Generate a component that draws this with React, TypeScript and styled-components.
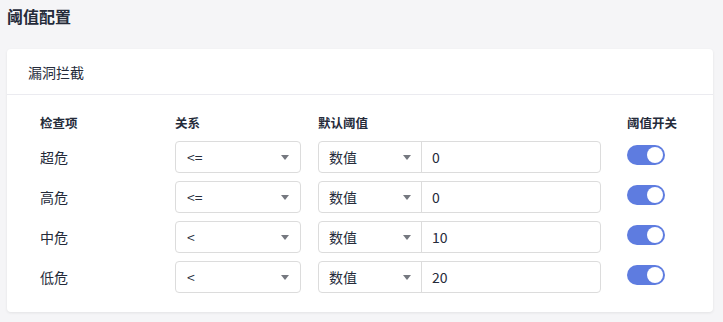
import React, { useState } from 'react';
import styled, { createGlobalStyle } from 'styled-components';

const GlobalStyle = createGlobalStyle`
  html, body {
    margin: 0;
    padding: 0;
    background: #f5f5f7;
    font-family: "Noto Sans CJK SC", "Noto Sans", sans-serif;
    color: #252b3a;
  }
  * { box-sizing: border-box; }
`;

const Page = styled.div`
  padding: 4px 10px 10px 7px;
  width: 723px;
  height: 322px;
`;

const PageTitle = styled.h1`
  font-size: 16px;
  font-weight: 700;
  line-height: 24px;
  margin: 0 0 21px 0;
  color: #252b3a;
`;

const Card = styled.div`
  width: 706px;
  background: #fff;
  border-radius: 4px;
  box-shadow: 0 1px 3px rgba(0, 0, 0, 0.08);
`;

const CardHeader = styled.div`
  height: 46px;
  padding: 0 21px;
  display: flex;
  align-items: center;
  font-size: 14px;
  color: #252b3a;
  border-bottom: 1px solid #ebebf0;
`;

const CardBody = styled.div`
  padding: 16px 20px 19px 33px;
  display: flex;
  flex-direction: column;
  gap: 8px;
`;

const Row = styled.div<{ $head?: boolean }>`
  display: grid;
  grid-template-columns: 135px 143px 309px 1fr;
  align-items: center;
  height: ${p => (p.$head ? '22px' : '32px')};
  margin-bottom: ${p => (p.$head ? '0' : '0')};
`;

const HeadCell = styled.div`
  font-size: 12.5px;
  font-weight: 700;
  color: #252b3a;
`;

const LabelCell = styled.div`
  font-size: 14px;
  color: #252b3a;
`;

const Select = styled.div<{ $width: number }>`
  width: ${p => p.$width}px;
  height: 32px;
  border: 1px solid #dcdcdc;
  border-radius: 4px;
  display: flex;
  align-items: center;
  justify-content: space-between;
  padding: 0 11px 0 11px;
  font-size: 14px;
  color: #252b3a;
  background: #fff;
`;

const Arrow = styled.span`
  width: 0;
  height: 0;
  border-left: 4px solid transparent;
  border-right: 4px solid transparent;
  border-top: 5px solid #75787f;
`;

const Compound = styled.div`
  width: 283px;
  height: 32px;
  border: 1px solid #dcdcdc;
  border-radius: 4px;
  display: flex;
  background: #fff;
`;

const CompoundSelect = styled.div`
  width: 103px;
  display: flex;
  align-items: center;
  justify-content: space-between;
  padding: 0 10px 0 10px;
  border-right: 1px solid #dcdcdc;
  font-size: 14px;
`;

const ValueInput = styled.input`
  flex: 1;
  min-width: 0;
  border: none;
  outline: none;
  background: transparent;
  padding: 0 10px;
  font-size: 14px;
  font-family: inherit;
  color: #252b3a;
`;

const Switch = styled.button<{ $on: boolean }>`
  position: relative;
  width: 38px;
  height: 20px;
  border: none;
  padding: 0;
  border-radius: 10px;
  background: ${p => (p.$on ? '#5e7ce0' : '#adb0b8')};
  cursor: pointer;

  &::after {
    content: '';
    position: absolute;
    top: 2px;
    left: ${p => (p.$on ? '20px' : '2px')};
    width: 16px;
    height: 16px;
    border-radius: 50%;
    background: #fff;
  }
`;

const initialRows = [
  { name: '超危', relation: '<=', value: '0' },
  { name: '高危', relation: '<=', value: '0' },
  { name: '中危', relation: '<', value: '10' },
  { name: '低危', relation: '<', value: '20' },
];

export default function App() {
  const [rows, setRows] = useState(initialRows.map(r => ({ ...r, on: true })));

  const update = (i: number, patch: Partial<(typeof rows)[number]>) => {
    setRows(prev => prev.map((r, idx) => (idx === i ? { ...r, ...patch } : r)));
  };

  return (
    <>
      <GlobalStyle />
      <Page>
        <PageTitle>阈值配置</PageTitle>
        <Card>
          <CardHeader>漏洞拦截</CardHeader>
          <CardBody>
            <Row $head>
              <HeadCell>检查项</HeadCell>
              <HeadCell>关系</HeadCell>
              <HeadCell>默认阈值</HeadCell>
              <HeadCell>阈值开关</HeadCell>
            </Row>
            {rows.map((r, i) => (
              <Row key={r.name}>
                <LabelCell>{r.name}</LabelCell>
                <Select $width={126}>
                  <span>{r.relation}</span>
                  <Arrow />
                </Select>
                <Compound>
                  <CompoundSelect>
                    <span>数值</span>
                    <Arrow />
                  </CompoundSelect>
                  <ValueInput
                    value={r.value}
                    onChange={e => update(i, { value: e.target.value })}
                  />
                </Compound>
                <div>
                  <Switch $on={r.on} onClick={() => update(i, { on: !r.on })} />
                </div>
              </Row>
            ))}
          </CardBody>
        </Card>
      </Page>
    </>
  );
}
